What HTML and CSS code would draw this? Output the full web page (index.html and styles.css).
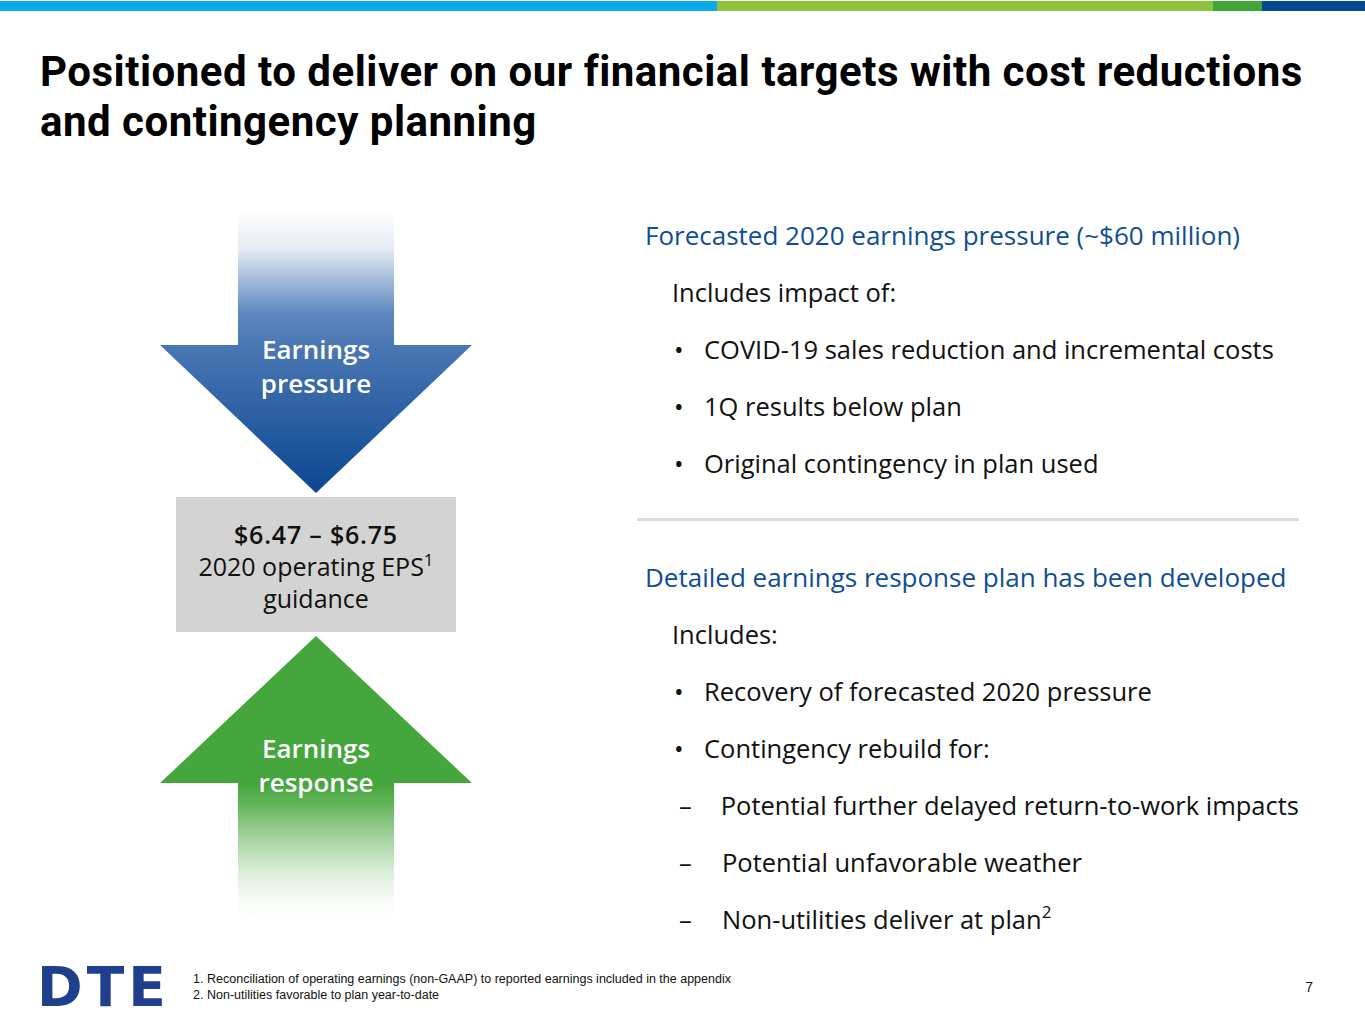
FILE: index.html
```html
<!DOCTYPE html>
<html lang="en">
<head>
<meta charset="utf-8">
<title>Positioned to deliver on our financial targets</title>
<link rel="stylesheet" href="styles.css">
</head>
<body>
<div class="slide">
  <div class="topbar">
    <span class="seg seg-sky"></span>
    <span class="seg seg-lime"></span>
    <span class="seg seg-green"></span>
    <span class="seg seg-navy"></span>
  </div>

  <h1 class="title">Positioned to deliver on our financial targets with cost reductions<br>and contingency planning</h1>

  <main class="content">
    <section class="diagram">
      <div class="arrow arrow-down"><span>Earnings<br>pressure</span></div>
      <div class="guidance">
        <div class="range">$6.47 – $6.75</div>
        <div>2020 operating EPS<sup>1</sup></div>
        <div>guidance</div>
      </div>
      <div class="arrow arrow-up"><span>Earnings<br>response</span></div>
    </section>

    <section class="points">
      <div class="row heading"><span>Forecasted 2020 earnings pressure (~$60 million)</span></div>
      <div class="row intro"><span>Includes impact of:</span></div>
      <div class="row bullet"><span class="mark">•</span><span>COVID-19 sales reduction and incremental costs</span></div>
      <div class="row bullet"><span class="mark">•</span><span>1Q results below plan</span></div>
      <div class="row bullet"><span class="mark">•</span><span>Original contingency in plan used</span></div>
      <div class="row divider"><hr></div>
      <div class="row heading"><span>Detailed earnings response plan has been developed</span></div>
      <div class="row intro"><span>Includes:</span></div>
      <div class="row bullet"><span class="mark">•</span><span>Recovery of forecasted 2020 pressure</span></div>
      <div class="row bullet"><span class="mark">•</span><span>Contingency rebuild for:</span></div>
      <div class="row sub"><span class="mark">–</span><span>Potential further delayed return-to-work impacts</span></div>
      <div class="row sub"><span class="mark">–</span><span>Potential unfavorable weather</span></div>
      <div class="row sub"><span class="mark">–</span><span>Non-utilities deliver at plan<sup>2</sup></span></div>
    </section>
  </main>

  <footer class="footer">
    <div class="logo">DTE</div>
    <ol class="notes">
      <li>Reconciliation of operating earnings (non-GAAP) to reported earnings included in the appendix</li>
      <li>Non-utilities favorable to plan year-to-date</li>
    </ol>
    <div class="page">7</div>
  </footer>
</div>
</body>
</html>
```

FILE: styles.css
```css
* { box-sizing: border-box; }

html, body {
  margin: 0;
  padding: 0;
  background: #ffffff;
}

body {
  font-family: "Open Sans", "Liberation Sans", Arial, sans-serif;
  color: #111111;
}

.slide {
  width: 1365px;
  height: 1024px;
  display: flex;
  flex-direction: column;
  overflow: hidden;
}

/* top colour strip */
.topbar {
  display: flex;
  height: 10px;
  margin-top: 1px;
}
.seg { display: block; height: 100%; }
.seg-sky { width: 717px; background: #0aaaea; }
.seg-lime { width: 496px; background: #8cc43f; }
.seg-green { width: 49px; background: #40a437; }
.seg-navy { flex: 1; background: #004b93; }

/* title */
.title {
  margin: 36px 0 0 0;
  padding: 0 20px 0 40px;
  font-family: Roboto, "Liberation Sans", sans-serif;
  font-weight: 700;
  font-size: 42px;
  line-height: 50px;
  letter-spacing: 0.5px;
  color: #000000;
  white-space: nowrap;
}

/* main area */
.content {
  display: grid;
  grid-template-columns: 312px 662px;
  column-gap: 165px;
  padding-left: 160px;
  margin-top: 61px;
}

.diagram {
  display: flex;
  flex-direction: column;
  align-items: center;
  gap: 4px;
  padding-top: 2px;
}

.arrow {
  width: 312px;
  text-align: center;
  color: #ffffff;
  font-size: 26px;
  line-height: 34px;
  font-weight: 600;
}

.arrow-down {
  height: 283px;
  padding-top: 122px;
  clip-path: polygon(25% 0, 75% 0, 75% 47.7%, 100% 47.7%, 50% 100%, 0 47.7%, 25% 47.7%);
  background: linear-gradient(to bottom,
    #ffffff 0%,
    #e4ebf4 14%,
    #9cb6d8 26%,
    #5f89c0 36%,
    #4a77b3 48%,
    #2f62a5 70%,
    #0b4790 100%);
}

.arrow-up {
  height: 284px;
  padding-top: 95px;
  clip-path: polygon(50% 0, 100% 51.8%, 75% 51.8%, 75% 100%, 25% 100%, 25% 51.8%, 0 51.8%);
  background: linear-gradient(to bottom,
    #45a63d 0%,
    #45a63d 52%,
    #5cb155 58%,
    #9fd099 70%,
    #d7ecd4 82%,
    #f8fcf7 93%,
    #ffffff 100%);
}

.guidance {
  width: 280px;
  height: 135px;
  padding-top: 3px;
  background: #d3d3d3;
  display: flex;
  flex-direction: column;
  align-items: center;
  justify-content: center;
  font-size: 25px;
  line-height: 32px;
  color: #111111;
}
.guidance .range { font-weight: 600; letter-spacing: 0.8px; }
.guidance sup { font-size: 17px; line-height: 0; vertical-align: 10px; }

/* right column */
.points {
  display: flex;
  flex-direction: column;
  margin-top: -2px;
}

.row {
  height: 57px;
  display: flex;
  align-items: center;
  font-size: 25.5px;
  white-space: nowrap;
}

.heading {
  color: #0e4e94;
  padding-left: 8px;
  font-size: 26px;
}

.intro { padding-left: 35px; }

.bullet { padding-left: 37px; }
.bullet .mark { width: 30px; }

.sub { padding-left: 42px; }
.sub .mark { width: 43px; }

.row sup { font-size: 17px; line-height: 0; vertical-align: 11px; }

.divider hr {
  width: 100%;
  margin: 0;
  border: 0;
  height: 3px;
  background: #d9d9d9;
}

/* footer */
.footer {
  display: flex;
  align-items: center;
  margin-top: auto;
  height: 74px;
  padding: 0 52px 0 40px;
}

.logo {
  font-family: "DejaVu Sans", sans-serif;
  font-weight: 700;
  font-size: 55px;
  line-height: 40px;
  height: 40px;
  letter-spacing: 4px;
  margin-left: -3px;
  color: #1f3f8d;
  width: 153px;
}

.notes {
  margin: 0;
  padding: 0 0 0 17px;
  font-family: "Liberation Sans", Arial, sans-serif;
  font-size: 12.5px;
  line-height: 16px;
  color: #111111;
}

.page {
  margin-left: auto;
  font-family: "Liberation Sans", Arial, sans-serif;
  font-size: 14px;
  color: #111111;
}
```
